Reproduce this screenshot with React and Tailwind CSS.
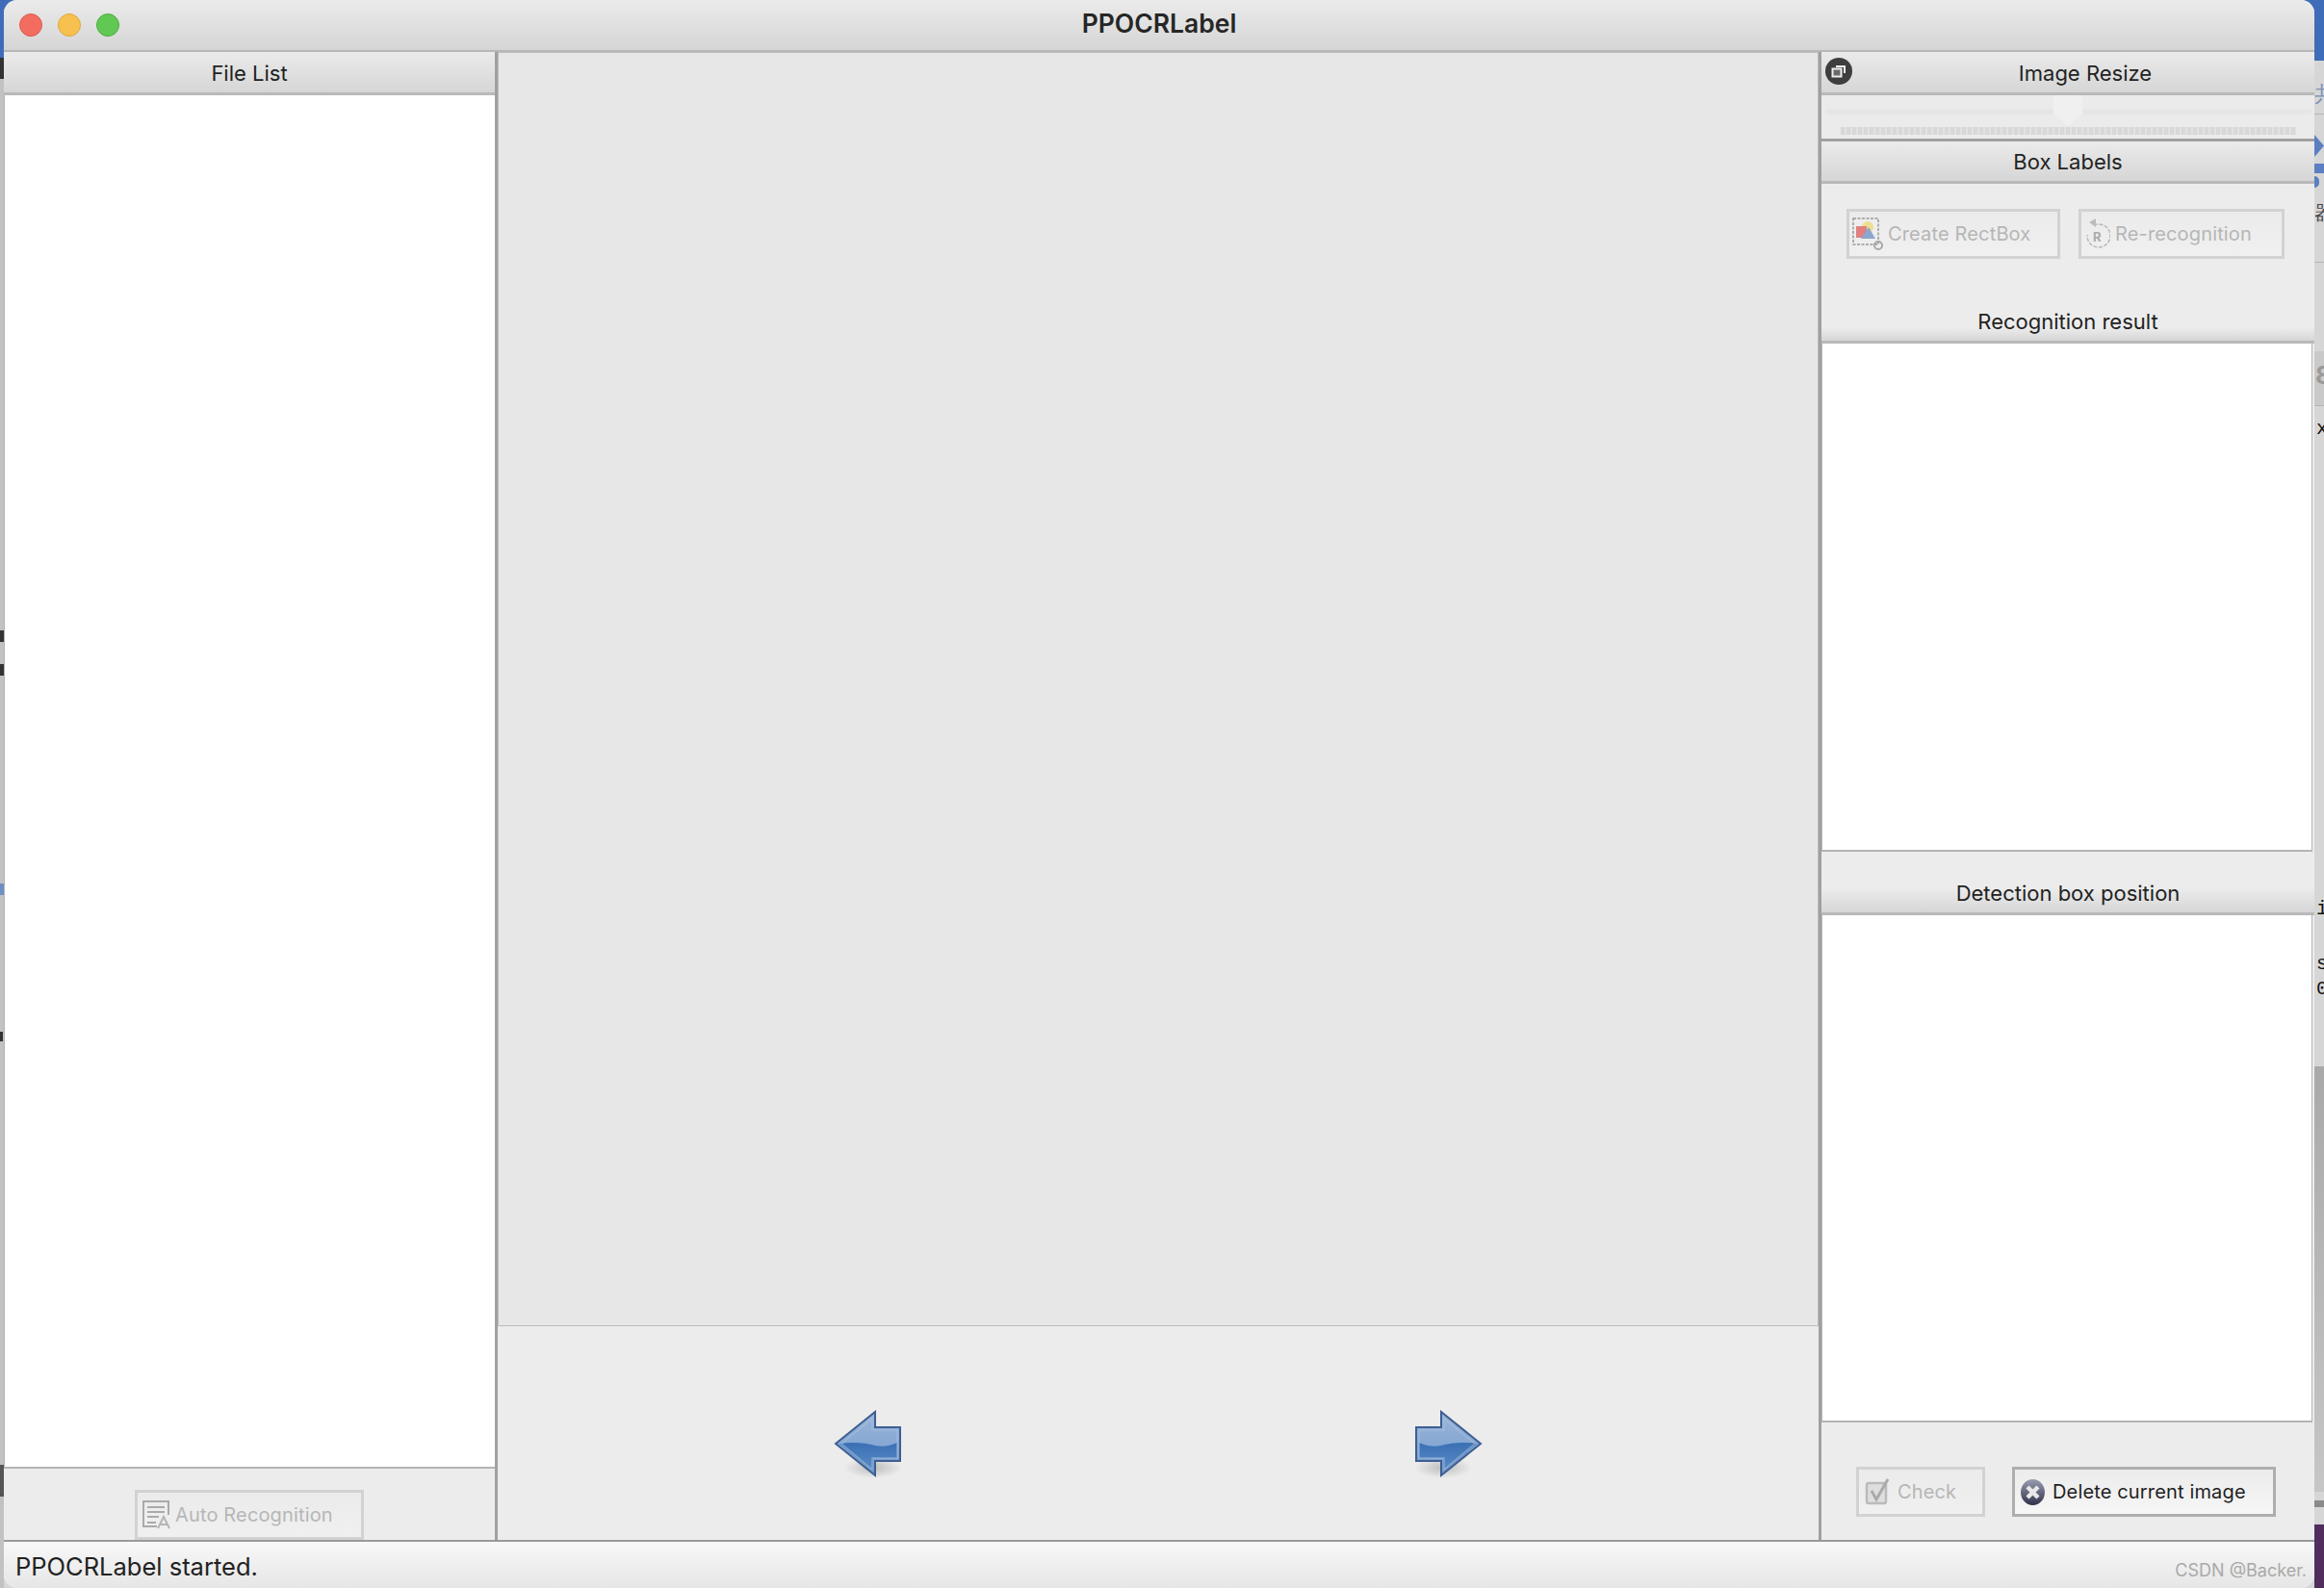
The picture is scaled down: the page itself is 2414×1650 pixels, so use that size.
const sans = "font-['Inter','Roboto',sans-serif]";

function DockHeader({ title, className = "" }) {
  return (
    <div
      className={`flex shrink-0 items-center justify-center border-b-[3px] border-[#b9b9b9] bg-gradient-to-b from-[#ebebeb] to-[#d6d6d6] pt-[2px] text-[22px] text-[#222] ${className}`}
    >
      {title}
    </div>
  );
}

function TallHeader({ title, className = "" }) {
  return (
    <div
      className={`flex shrink-0 items-end justify-center border-b-[3px] border-[#b9b9b9] bg-[linear-gradient(to_bottom,#ececec_60%,#d6d6d6)] pb-[3px] text-[22px] leading-[34px] text-[#222] ${className}`}
    >
      {title}
    </div>
  );
}

function ListBox({ className = "" }) {
  return <div className={`border-b-2 border-l border-[#b4b4b4] bg-white ${className}`} />;
}

function ToolButton({ icon, label, disabled, className = "" }) {
  return (
    <div
      className={`flex h-[52px] items-center border-[3px] text-[20px] tracking-[0.15px] ${
        disabled
          ? "border-[#d2d2d2] bg-gradient-to-b from-[#ebebeb] to-[#f0f0f0] text-[#b6b6b6]"
          : "border-[#aeaeae] bg-gradient-to-b from-[#ececec] to-[#f6f6f6] text-[#1f1f1f]"
      } ${className}`}
    >
      {icon}
      <span>{label}</span>
    </div>
  );
}

function RectIcon() {
  return (
    <svg width="32" height="34" viewBox="0 0 32 34">
      <rect x="1" y="1" width="26" height="27" fill="#eee" stroke="#999" strokeWidth="1.5" strokeDasharray="3 1.5" />
      <circle cx="16" cy="10" r="6" fill="#ecdf90" />
      <rect x="4" y="9" width="11" height="12" fill="#e08080" />
      <path d="M9 22 L17 10 L24 22 Z" fill="#8ba6cf" />
      <circle cx="27" cy="29" r="4" fill="none" stroke="#a8a8a8" strokeWidth="2" />
    </svg>
  );
}

function RedoIcon() {
  return (
    <svg width="26" height="34" viewBox="0 0 26 34">
      <path d="M9 8 A12 12 0 1 1 2 18" fill="none" stroke="#b8b8b8" strokeWidth="1.5" strokeDasharray="4 1.5" />
      <path d="M11 1 L4 5 L11 10 Z" fill="#bcbcbc" />
      <text x="8" y="25" fontSize="13" fontWeight="700" fill="#aaa" fontFamily="Inter">R</text>
    </svg>
  );
}

function AutoIcon() {
  return (
    <svg width="29" height="32" viewBox="0 0 29 32">
      <path d="M27 16 V2 H1 V28 H15" fill="none" stroke="#aaa" strokeWidth="2" />
      <path d="M5 8 H23 M5 13 H23 M5 18 H17 M5 24 H14" stroke="#aaa" strokeWidth="2" />
      <path d="M16 30 L22 18 L28 30 M19 26 H25" fill="none" stroke="#b5b5b5" strokeWidth="2" />
    </svg>
  );
}

function CheckIcon() {
  return (
    <svg width="26" height="28" viewBox="0 0 26 28">
      <rect x="2" y="5" width="20" height="21" rx="2" fill="#dedede" stroke="#bbb" strokeWidth="2.5" />
      <path d="M7 13 L12 22 L24 1" fill="none" stroke="#aaa" strokeWidth="3" />
    </svg>
  );
}

function DeleteIcon() {
  return (
    <svg width="25" height="27" viewBox="0 0 25 27">
      <defs>
        <linearGradient id="deleteBall" x1="0" y1="0" x2="0" y2="1">
          <stop offset="0" stopColor="#9a9eb2" />
          <stop offset="1" stopColor="#30314a" />
        </linearGradient>
      </defs>
      <ellipse cx="12.5" cy="13.5" rx="12.5" ry="13.5" fill="url(#deleteBall)" />
      <path d="M7 8 L18 19 M18 8 L7 19" stroke="#e8e8e8" strokeWidth="4.5" />
    </svg>
  );
}

function NavArrow({ flip }) {
  const id = flip ? "R" : "L";
  return (
    <svg width="72" height="72" viewBox="0 0 72 72" className={flip ? "-scale-x-100" : ""}>
      <defs>
        <linearGradient id={`arrowTop${id}`} x1="0" y1="0" x2="0" y2="1">
          <stop offset="0" stopColor="#9cb7da" />
          <stop offset="1" stopColor="#6f98cb" />
        </linearGradient>
        <linearGradient id={`arrowWave${id}`} x1="0" y1="0" x2="0" y2="1">
          <stop offset="0" stopColor="#3a70b4" />
          <stop offset="1" stopColor="#5c8cc6" />
        </linearGradient>
        <radialGradient id={`arrowShade${id}`}>
          <stop offset="0" stopColor="#000" stopOpacity="0.2" />
          <stop offset="1" stopColor="#000" stopOpacity="0" />
        </radialGradient>
      </defs>
      <ellipse cx="42" cy="60" rx="30" ry="11" fill={`url(#arrowShade${id})`} />
      <path
        d="M3 35 L44 2 V18 H70 V53 H44 V68 Z"
        fill={`url(#arrowTop${id})`}
        stroke="#3d5f92"
        strokeWidth="2"
      />
      <path d="M7 35 C20 33 34 34 44 37 C52 39 60 37 67 34 V50 H42 V64 Z" fill={`url(#arrowWave${id})`} />
      <path d="M9 35 L41 9 V21 H67 V50 H41 V62 Z" fill="none" stroke="#a9c0de" strokeWidth="1.5" opacity="0.6" />
    </svg>
  );
}

function ResizeSlider() {
  return (
    <div className="relative h-[48px] shrink-0 border-b-[3px] border-[#a0a0a0] bg-[#ebebeb]">
      <div className="absolute left-[4px] right-[3px] top-[14px] h-[6px] rounded-full bg-[#e6e6e6]" />
      <div className="absolute left-[241px] top-0 h-[32px] w-[30px] bg-[#f0f0f0] [clip-path:polygon(0_0,100%_0,100%_60%,50%_100%,0_60%)]" />
      <div className="absolute left-[20px] right-[19px] top-[33px] h-[8px] bg-[repeating-linear-gradient(to_right,#d8d8d8_0,#d8d8d8_4px,#e2e2e2_4px,#e2e2e2_6px)]" />
    </div>
  );
}

// bits of the desktop windows that show around the app window
function Backdrop() {
  return (
    <>
      <div className="absolute inset-x-0 top-0 h-[63px] bg-[#3f6cb8]" />
      <div className="absolute left-0 top-[63px] h-[1587px] w-[4px] bg-[#c2c2c2]" />
      <div className="absolute left-0 top-[1522px] h-[33px] w-[4px] bg-[#555]" />
      <div className="absolute left-0 top-[918px] h-[12px] w-[4px] bg-[#6f8fc4]" />
      <div className="absolute left-0 top-[60px] h-[22px] w-[4px] bg-[#333]" />
      <div className="absolute left-0 top-[655px] h-[12px] w-[4px] bg-[#333]" />
      <div className="absolute left-0 top-[690px] h-[12px] w-[4px] bg-[#333]" />
      <div className="absolute left-0 top-[1072px] h-[10px] w-[3px] bg-[#333]" />

      <div className="absolute right-0 top-[118px] h-px w-[10px] bg-[#b5b5b5]" />
      <div className="absolute right-0 top-[140px] h-[23px] w-[10px] bg-[#5b7fc0] [clip-path:polygon(0_0,100%_50%,0_100%)]" />
      <div className="absolute right-0 top-[170px] h-[10px] w-[10px] bg-[#5b7fc0]" />
      <div className="absolute left-[2404px] top-[183px] h-[12px] w-[5px] rounded-r-full bg-[#5b7fc0]" />
      <div className="absolute right-0 top-[272px] h-px w-[10px] bg-[#b5b5b5]" />
      <div className="absolute right-0 top-[365px] h-[57px] w-[10px] border-b border-[#b5b5b5] bg-[#c9c9c9]" />
      <div className="absolute right-0 top-[1108px] h-[442px] w-[10px] bg-gradient-to-b from-[#a9a9a9] to-[#c6c6c6]" />
      <div className="absolute right-0 top-[1559px] h-[7px] w-[10px] bg-[#8a8a8a]" />
      <div className="absolute right-0 top-[1584px] h-[66px] w-[10px] bg-[#4f2e5e]" />

      <span className="absolute left-[2404px] top-[86px] w-[10px] overflow-hidden text-[22px] leading-none text-[#7d90b5]">共</span>
      <span className="absolute left-[2404px] top-[211px] w-[10px] overflow-hidden text-[20px] leading-none text-[#444]">器</span>
      <span className="absolute left-[2405px] top-[377px] w-[9px] overflow-hidden text-[26px] font-bold leading-none text-[#999]">8</span>
      <span className="absolute left-[2406px] top-[436px] font-['Liberation_Mono',monospace] text-[20px] leading-none text-[#111]">x</span>
      <span className="absolute left-[2406px] top-[935px] font-['Liberation_Mono',monospace] text-[20px] leading-none text-[#111]">i</span>
      <span className="absolute left-[2406px] top-[992px] font-['Liberation_Mono',monospace] text-[20px] leading-none text-[#111]">s</span>
      <span className="absolute left-[2406px] top-[1018px] font-['Liberation_Mono',monospace] text-[20px] leading-none text-[#111]">0</span>
    </>
  );
}

export default function App() {
  return (
    <div className={`relative h-[1650px] w-[2414px] overflow-hidden bg-[#d6d6d6] ${sans}`}>
      <Backdrop />

      <div className="absolute bottom-0 left-[4px] top-0 flex w-[2400px] flex-col overflow-hidden rounded-[14px] bg-[#ececec]">
        <div className="relative flex h-[54px] shrink-0 items-center justify-center border-b-[2px] border-[#b8b8b8] bg-gradient-to-b from-[#ebebeb] to-[#d5d5d5] pb-[2px] text-[26.5px] font-semibold text-[#262626]">
          <div className="absolute left-[16px] top-[14px] flex gap-4">
            <span className="h-6 w-6 rounded-full border border-[#dd5a50] bg-[#f26d60]" />
            <span className="h-6 w-6 rounded-full border border-[#dfa53e] bg-[#f7c14f]" />
            <span className="h-6 w-6 rounded-full border border-[#4ead41] bg-[#60c853]" />
          </div>
          PPOCRLabel
        </div>

        <div className="flex min-h-0 flex-1">
          <div className="flex w-[513px] shrink-0 flex-col border-r-[3px] border-[#a0a0a0]">
            <DockHeader title="File List" className="h-[45px]" />
            <ListBox className="h-[1427px] shrink-0" />
            <div className="flex flex-1 items-end justify-center">
              <ToolButton icon={<AutoIcon />} label="Auto Recognition" disabled className="w-[238px] gap-[5px] pl-[5px]" />
            </div>
          </div>

          <div className="flex w-[1372px] shrink-0 flex-col">
            <div className="h-[1324px] shrink-0 border border-[#bdbdbd] bg-[#e7e7e7]" />
            <div className="flex flex-1 items-start gap-[532px] pl-[348px] pt-[87px]">
              <NavArrow />
              <NavArrow flip />
            </div>
          </div>

          <div className="flex min-w-0 flex-1 flex-col border-l-[3px] border-[#a0a0a0]">
            <div className="relative">
              <DockHeader title="Image Resize" className="h-[45px] pl-[36px]" />
              <span className="absolute left-[4px] top-[6px] flex h-7 w-7 items-center justify-center rounded-full bg-[#3e3e3e]">
                <svg width="16" height="16" viewBox="0 0 16 16" fill="none" stroke="#eee" strokeWidth="2">
                  <rect x="1.5" y="5.5" width="9" height="8" fill="#eee" fillOpacity="0.25" />
                  <path d="M5 3 H14 V10" />
                </svg>
              </span>
            </div>
            <ResizeSlider />
            <DockHeader title="Box Labels" className="h-[44px]" />
            <div className="flex h-[129px] shrink-0 items-start gap-[19px] pl-[26px] pt-[26px]">
              <ToolButton icon={<RectIcon />} label="Create RectBox" disabled className="w-[222px] gap-[5px] pl-[3px]" />
              <ToolButton icon={<RedoIcon />} label="Re-recognition" disabled className="w-[214px] gap-[5px] pl-[4px]" />
            </div>
            <TallHeader title="Recognition result" className="h-[37px]" />
            <ListBox className="mr-[2px] h-[528px] shrink-0 border-r" />
            <TallHeader title="Detection box position" className="h-[66px]" />
            <ListBox className="mr-[2px] h-[527px] shrink-0 border-r" />
            <div className="flex flex-1 items-start gap-[28px] pl-[36px] pt-[46px]">
              <ToolButton icon={<CheckIcon />} label="Check" disabled className="w-[134px] gap-[8px] pl-[6px]" />
              <ToolButton icon={<DeleteIcon />} label="Delete current image" className="w-[274px] gap-[8px] pl-[6px]" />
            </div>
          </div>
        </div>

        <div className="relative flex h-[50px] shrink-0 items-center border-t-2 border-[#9a9a9a] bg-gradient-to-b from-[#f8f8f8] to-[#e6e6e6] pl-[12px] pt-[5px] text-[25.5px] text-[#222]">
          PPOCRLabel started.
          <span className="absolute bottom-[7px] right-[8px] text-[18px] leading-[22px] text-[#a9a9a9]">CSDN @Backer.</span>
        </div>
      </div>
    </div>
  );
}
